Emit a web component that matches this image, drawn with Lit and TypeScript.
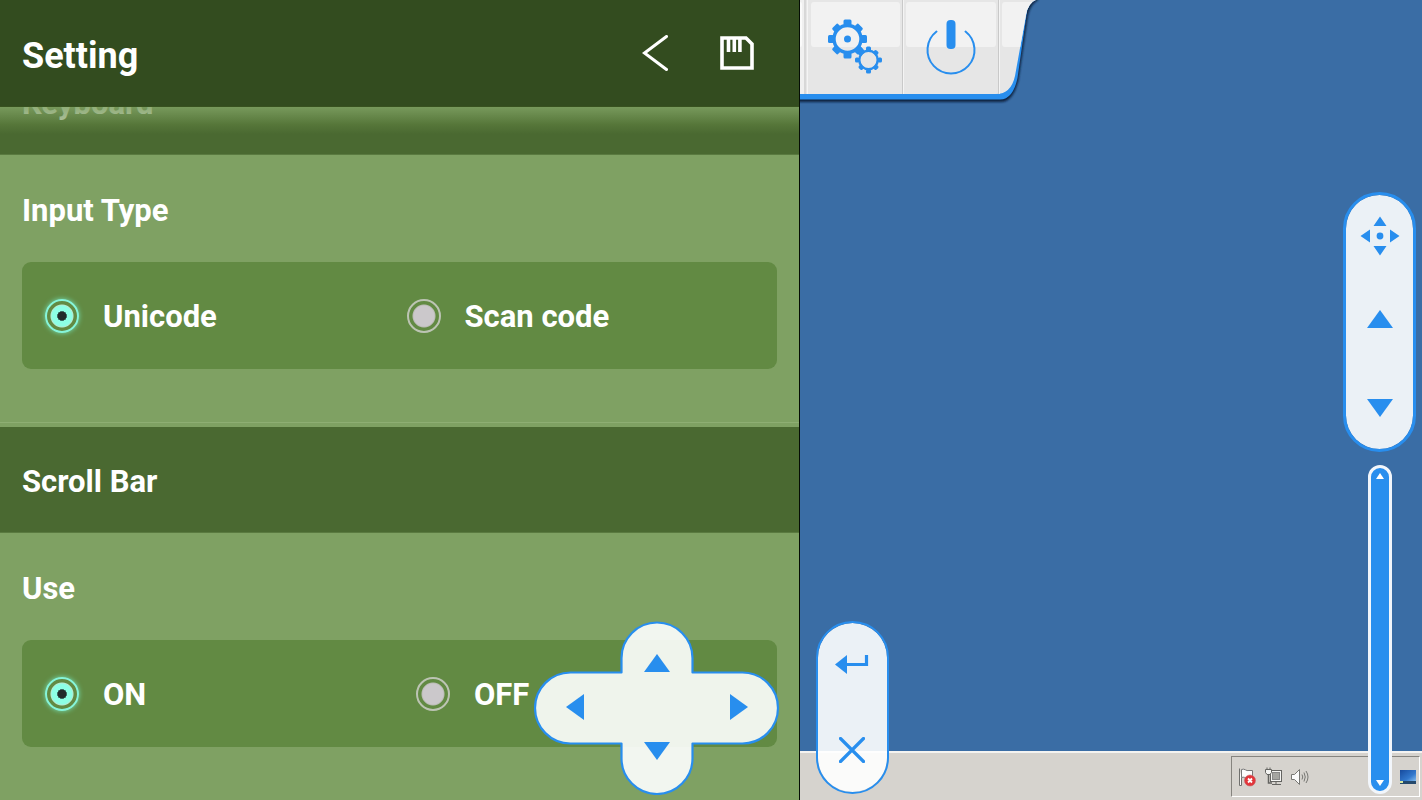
import { LitElement, html, svg, css } from "lit";
import { customElement, property, state, query } from "lit/decorators.js";

type Option = { value: string; label: string };

const turns = (count: number) => Array.from({ length: count }, (_, i) => (360 / count) * i);

const triangle = (direction: "up" | "down" | "left" | "right") => {
  const points = {
    up: "0,18 13,0 26,18",
    down: "0,0 13,18 26,0",
    left: "18,0 0,13 18,26",
    right: "0,0 18,13 0,26",
  }[direction];
  const upright = direction === "up" || direction === "down";
  return html`<svg width=${upright ? 26 : 18} height=${upright ? 18 : 26} aria-hidden="true">
    <polygon points=${points} fill="#288eee" />
  </svg>`;
};

@customElement("radio-group")
class RadioGroup extends LitElement {
  @property() name = "";
  @property() legend = "";
  @property() value = "";
  @property({ attribute: false }) options: Option[] = [];

  static styles = css`
    :host { display: block; }
    .group { margin: 0; padding: 0 22px 53px; border: 0; min-width: 0; }
    .legend {
      display: block; padding: 0; font-size: 31px; line-height: 111px; height: 107px;
    }
    .box {
      display: grid; grid-template-columns: 51fr 49fr; align-items: center;
      height: 107px; box-sizing: border-box; padding: 0 23px;
      border-radius: 9px; background: #628a43;
    }
    .box.wide { grid-template-columns: 371fr 338fr; }
    .option { display: flex; align-items: center; gap: 24px; font-size: 31px; line-height: 40px; }
    .text { padding-top: 3px; }
    .radio {
      appearance: none; flex: none; margin: 0; width: 34px; height: 34px; border-radius: 50%;
      border: 2px solid #bcc4b3;
      background: radial-gradient(circle, #cbc8cb 10px, #bbbcb6 11px, transparent 12px);
    }
    .radio:checked {
      border-color: #86f5da;
      background: radial-gradient(circle, #222b2b 4px, #55a090 5px, #8dffe5 5px, #8dffe5 10px, #b6e9d0 11px, transparent 12px);
      box-shadow: 0 0 5px #75dfb4;
    }
  `;

  render() {
    return html`<fieldset class="group">
      <legend class="legend">${this.legend}</legend>
      <div class="box ${this.name === "scrollbar" ? "wide" : ""}">
        ${this.options.map(
          (o) => html`<label class="option">
            <input class="radio" type="radio" name=${this.name} .checked=${o.value === this.value}
              @change=${() => (this.value = o.value)} />
            <span class="text">${o.label}</span>
          </label>`
        )}
      </div>
    </fieldset>`;
  }
}

@customElement("settings-panel")
class SettingsPanel extends LitElement {
  @query(".scroller") scroller!: HTMLElement;

  static styles = css`
    :host {
      display: flex; flex-direction: column; min-width: 0; position: relative;
      box-sizing: border-box; border-right: 1px solid #050d05;
      background: #7fa163; color: #fff;
    }
    .header {
      display: flex; align-items: center; gap: 28px; flex: none;
      height: 107px; box-sizing: border-box; padding: 0 35px 0 22px; background: #334c1f;
      border-bottom: 1px solid #38521f;
    }
    .title { flex: 1; margin: 0; font-size: 36px; line-height: 40px; font-weight: 700; padding-top: 6px; }
    .action {
      display: grid; place-items: center; width: 54px; height: 54px; padding: 0;
      border: 0; background: none;
    }
    .viewport { position: relative; flex: 1; min-height: 0; display: flex; }
    .fade {
      position: absolute; inset: 0 0 auto; height: 27px; pointer-events: none;
      background: linear-gradient(rgba(127, 161, 99, 0.86), rgba(98, 132, 66, 0.5) 65%, rgba(75, 105, 49, 0));
    }
    .scroller { flex: 1; overflow-y: auto; scrollbar-width: none; }
    .heading {
      margin: 0; padding: 0 22px; height: 106px; box-sizing: border-box;
      line-height: 110px; font-size: 31px; font-weight: 700;
      background: #4a6931; border-bottom: 1px solid #5a7a40;
    }
    .section { border-bottom: 1px solid #8eae73; margin-bottom: 4px; }
  `;

  async firstUpdated() {
    const groups = [...this.renderRoot.querySelectorAll<RadioGroup>("radio-group")];
    await Promise.all(groups.map((g) => g.updateComplete));
    this.scroller.scrollTop = 58;
  }

  render() {
    return html`
      <header class="header">
        <h1 class="title">Setting</h1>
        <button class="action" aria-label="Back">
          <svg width="26" height="36" viewBox="0 0 26 36" fill="none" stroke="#fff" stroke-width="3">
            <path d="M24.5 1.5 2.5 18l22 16.500" stroke-linecap="round" />
          </svg>
        </button>
        <button class="action" aria-label="Save">
          <svg width="34" height="34" viewBox="0 0 34 34">
            <path d="M2 2H26L32 8V32H2Z" fill="none" stroke="#fff" stroke-width="3.600" />
            <path d="M8.500 2V16M14.300 2V16M19.900 2V16" stroke="#fff" stroke-width="3.600" />
          </svg>
        </button>
      </header>
      <div class="viewport">
        <div class="scroller">
          <section class="section">
            <h2 class="heading">Keyboard</h2>
            <radio-group name="input" legend="Input Type" value="unicode"
              .options=${[{ value: "unicode", label: "Unicode" }, { value: "scan", label: "Scan code" }]}></radio-group>
          </section>
          <section class="section">
            <h2 class="heading">Scroll Bar</h2>
            <radio-group name="scrollbar" legend="Use" value="on"
              .options=${[{ value: "on", label: "ON" }, { value: "off", label: "OFF" }]}></radio-group>
          </section>
        </div>
        <div class="fade"></div>
      </div>
    `;
  }
}

@customElement("direction-pad")
class DirectionPad extends LitElement {
  static styles = css`
    :host { display: block; width: 246px; height: 174px; }
    .pad { position: relative; height: 100%; }
    .shape { position: absolute; inset: 0; }
    .keys {
      position: relative; display: grid; height: 100%;
      grid-template-columns: 88px 70px 88px; grid-template-rows: 51px 70px 53px;
    }
    .key { display: flex; padding: 0; border: 0; background: none; align-items: center; justify-content: center; }
    .up { grid-area: 1 / 2; align-items: flex-end; }
    .left { grid-area: 2 / 1; justify-content: flex-start; padding-left: 32px; }
    .right { grid-area: 2 / 3; justify-content: flex-end; padding-right: 32px; }
    .down { grid-area: 3 / 2; align-items: flex-start; }
  `;

  render() {
    return html`<div class="pad">
      <svg class="shape" width="246" height="174" viewBox="0 0 246 174" aria-hidden="true">
        <path fill="#fff" fill-opacity=".9" stroke="#288eee" stroke-width="2.200" stroke-linejoin="round"
          d="M87.500 51.500V37A35.500 35.500 0 0 1 158.500 37V51.500H208.500A35.500 35.500 0 0 1 208.500 122.500H158.500V137.500A35.500 35.500 0 0 1 87.500 137.500V122.500H36.500A35.500 35.500 0 0 1 36.500 51.500Z" />
      </svg>
      <div class="keys">
        <button class="key up" aria-label="Up">${triangle("up")}</button>
        <button class="key left" aria-label="Left">${triangle("left")}</button>
        <button class="key right" aria-label="Right">${triangle("right")}</button>
        <button class="key down" aria-label="Down">${triangle("down")}</button>
      </div>
    </div>`;
  }
}

@customElement("remote-desktop")
class RemoteDesktop extends LitElement {
  @state() private scroll = 0;

  static styles = css`
    :host { display: flex; flex-direction: column; position: relative; min-width: 0; background: #3a6da5; }
    button { padding: 0; border: 0; background: none; }
    .toolbar { position: absolute; top: 0; left: 0; width: 244px; height: 108px; }
    .plate { position: absolute; inset: 0; }
    .tools { position: relative; display: flex; height: 94px; padding-left: 7px; }
    .tool { width: 96px; height: 94px; display: block; }
    .pill {
      position: absolute; display: flex; flex-direction: column; align-items: center;
      box-sizing: border-box; border: 2px solid #288eee; border-radius: 37px;
      background: rgba(255, 255, 255, 0.9); background-clip: padding-box;
    }
    .pill button { display: grid; place-items: center; width: 100%; flex: 1; }
    .wheel { top: 192px; right: 6px; width: 73px; height: 260px; border-width: 3px; }
    .wheel button:last-child { padding-top: 6px; }
    .keys { left: 16px; bottom: 6px; width: 73px; height: 173px; }
    .track {
      position: absolute; right: 30px; top: 465px; bottom: 6px; width: 24px; box-sizing: border-box;
      display: flex; flex-direction: column; align-items: center; justify-content: space-between;
      border: 3px solid #f2f6fb; border-radius: 12px; background: #288eee; padding: 4px 0;
    }
    .track button { display: block; height: 8px; }
    .track svg { display: block; }
    .space { flex: 1; }
    .taskbar {
      display: flex; justify-content: flex-end; height: 49px; box-sizing: border-box;
      padding: 3px 2px; background: #d6d3ce; border-top: 2px solid #f4f3f1;
    }
    .tray {
      display: flex; align-items: center; gap: 8px; width: 189px; box-sizing: border-box;
      padding: 0 2px 0 6px; border: 1px solid #fff; border-top-color: #86847f; border-left-color: #86847f;
    }
    .tray svg { display: block; }
    .peek { margin-left: auto; }
  `;

  private gear(cx: number, cy: number, ring: number, reach: number, tooth: number, line: number) {
    return svg`<g transform="translate(${cx} ${cy})">
      <circle r=${ring} fill="none" stroke="#288eee" stroke-width=${line} />
      ${turns(8).map(
        (a, i) => svg`<rect x=${-tooth / 2} y=${-reach + (i % 2)} width=${tooth} height=${reach - ring}
          rx="1.500" fill="#288eee" transform="rotate(${a})" />`
      )}
    </g>`;
  }

  render() {
    return html`
      <div class="space"></div>
      <footer class="taskbar">
        <div class="tray">
          <button aria-label="Action center">
            <svg width="18" height="20" viewBox="0 0 18 20">
              <path d="M1.500 1.500V18.500H3.500V10.500" fill="#fff" stroke="#6f6f6d" />
              <path d="M3.500 2.500C7 1 8 4.500 11 3.500H14.500V11H9C7 11 6 9.500 3.500 10.500Z" fill="#fdfdfd" stroke="#777" />
              <circle cx="12" cy="13.500" r="5.500" fill="#e2353a" stroke="#c6666a" stroke-width=".6" />
              <path d="M10 11.500 14 15.500M14 11.500 10 15.500" stroke="#fff" stroke-width="1.800" />
            </svg>
          </button>
          <button aria-label="Network">
            <svg width="18" height="20" viewBox="0 0 18 20" fill="#f4f4f2" stroke="#646461">
              <rect x="6.500" y="3.500" width="11" height="11" />
              <rect x="8.500" y="5.500" width="7" height="7" fill="#a5a5a1" stroke="#888" />
              <path d="M8 17.500H17M12 14.500V17" />
              <path d="M1.500 2.500H7.500V5.500L6 7.500H3L1.500 5.500ZM3 .500V2.500M6 .500V2.500" />
              <path d="M4.500 7.500V16H8" fill="none" stroke-width="1.500" />
            </svg>
          </button>
          <button aria-label="Volume">
            <svg width="19" height="20" viewBox="0 0 19 20" fill="none" stroke="#777773">
              <path d="M1.500 7.500H4.500L9.500 2.500V17.500L4.500 12.500H1.500Z" fill="#fbfbfb" />
              <path d="M12 7.500Q13.500 10 12 12.500M14 5.500Q16.500 10 14 14.500M16 4Q20 10 16 16" />
            </svg>
          </button>
          <button class="peek" aria-label="Show desktop">
            <svg width="18" height="16" viewBox="0 0 18 16">
              <defs><linearGradient id="sky" x2="1" y2="1">
                <stop stop-color="#164a9d" /><stop offset=".6" stop-color="#3278cd" /><stop offset="1" stop-color="#8cc3f2" />
              </linearGradient></defs>
              <rect x="1" y="1" width="16" height="12" fill="url(#sky)" />
              <path d="M1 12H17V15H1Z" fill="#24496c" /><path d="M1 12H4V14H1Z" fill="#d8e8a0" />
            </svg>
          </button>
        </div>
      </footer>

      <nav class="toolbar" aria-label="Session">
        <svg class="plate" width="244" height="108" viewBox="0 0 244 108" aria-hidden="true">
          <defs>
            <filter id="soft" x="-10%" y="-10%" width="120%" height="120%"><feGaussianBlur stdDeviation="1" /></filter>
            <clipPath id="face"><path d="M0 0H236Q228 3 226 15L215 76Q211 94 196 94H0Z" /></clipPath>
          </defs>
          <path d="M-4 -4H238V0Q230 5 228 15L218.500 80Q213 102 201 102H-4Z" fill="#0e2440" filter="url(#soft)" />
          <path d="M0 0H236Q228 3 226.500 15L217.500 78Q213 99.500 200 99.500H0Z" fill="#288eee" />
          <g clip-path="url(#face)">
            <rect width="240" height="94" fill="#e6e6e6" />
            <rect width="4" height="94" fill="#f0f0f0" />
            <rect x="-6" y="2" width="8" height="45" rx="2" fill="#fafafa" />
            <rect x="11" y="2" width="89" height="45" rx="3" fill="#f2f2f2" />
            <rect x="106" y="2" width="90" height="45" rx="3" fill="#f2f2f2" />
            <rect x="202" y="2" width="60" height="45" rx="3" fill="#f2f2f2" />
            <path d="M5 0V94M102.500 0V94M198.500 0V94" stroke="#c9c9c9" />
            <path d="M7.500 0V94M103.500 0V94M199.500 0V94" stroke="#f4f4f4" />
          </g>
        </svg>
        <div class="tools">
          <button class="tool" aria-label="Settings">
            <svg width="96" height="94" viewBox="0 0 96 94">
              ${this.gear(40.5, 39, 13.5, 19.5, 8, 3.4)}
              <circle cx="40.500" cy="39" r="3.500" fill="#288eee" />
              <circle cx="61.500" cy="60" r="11" fill="#e6e6e6" />
              <path d="M50 48 55 53" stroke="#288eee" stroke-width="7" />
              <circle cx="61.500" cy="60" r="9" fill="#e6e6e6" />
              ${this.gear(61.5, 60, 9.2, 13.5, 5, 2.4)}
            </svg>
          </button>
          <button class="tool" aria-label="Power">
            <svg width="96" height="94" viewBox="0 0 96 94">
              <path d="M33.500 31.500A23.500 23.500 0 1 0 62.500 31.500" fill="none" stroke="#288eee" stroke-width="2" stroke-linecap="round" />
              <rect x="43.500" y="20" width="9" height="29" rx="4" fill="#288eee" />
            </svg>
          </button>
        </div>
      </nav>

      <div class="pill wheel">
        <button aria-label="Move">
          <svg width="40" height="40" viewBox="0 0 40 40" fill="#288eee">
            <path d="M13.500 10 20 .500 26.500 10ZM13.500 30 20 39.500 26.500 30ZM10 13.500 .500 20 10 26.500ZM30 13.500 39.500 20 30 26.500Z" />
            <circle cx="20" cy="20" r="3.400" />
          </svg>
        </button>
        <button aria-label="Scroll up" @click=${() => (this.scroll -= 1)}>${triangle("up")}</button>
        <button aria-label="Scroll down" @click=${() => (this.scroll += 1)}>${triangle("down")}</button>
      </div>

      <div class="pill keys">
        <button aria-label="Enter">
          <svg width="34" height="20" viewBox="0 0 34 20">
            <path d="M0 9.500 12 0V19Z" fill="#288eee" />
            <path d="M11 9.500H31.500V0" fill="none" stroke="#288eee" stroke-width="3.200" />
          </svg>
        </button>
        <button aria-label="Close">
          <svg width="26" height="26" viewBox="0 0 26 26">
            <path d="M1.500 1.500 24.500 24.500M24.500 1.500 1.500 24.500" stroke="#288eee" stroke-width="3.200" stroke-linecap="round" />
          </svg>
        </button>
      </div>

      <div class="track">
        <button aria-label="Page up"><svg width="8" height="6"><path d="M0 6 4 0 8 6Z" fill="#fff" /></svg></button>
        <button aria-label="Page down"><svg width="8" height="6"><path d="M0 0 4 6 8 0Z" fill="#fff" /></svg></button>
      </div>
    `;
  }
}

@customElement("app-root")
class AppRoot extends LitElement {
  static styles = css`
    :host {
      display: grid; grid-template-columns: 9fr 7fr; grid-template-rows: minmax(0, 1fr); position: relative;
      height: 100vh; overflow: hidden;
      font-family: Roboto, "Liberation Sans", sans-serif; font-weight: 700;
    }
    .left { display: grid; grid-template-rows: minmax(0, 1fr); position: relative; min-width: 0; min-height: 0; }
    .panel { min-height: 0; }
    .pad { position: absolute; right: 20px; bottom: 5px; }
  `;

  render() {
    return html`
      <div class="left">
        <settings-panel class="panel"></settings-panel>
        <direction-pad class="pad"></direction-pad>
      </div>
      <remote-desktop></remote-desktop>
    `;
  }
}
